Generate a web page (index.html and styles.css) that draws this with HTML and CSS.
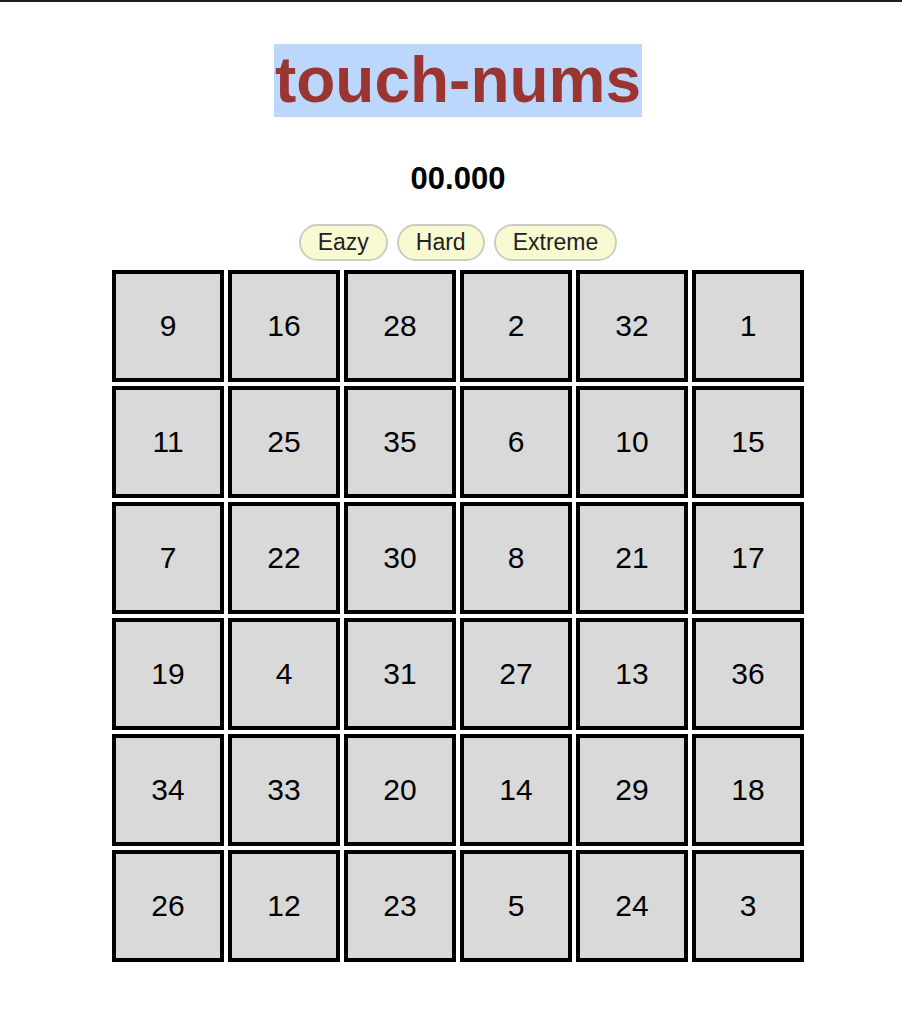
FILE: index.html
```html
<!DOCTYPE html>
<html lang="en">
<head>
<meta charset="utf-8">
<title>touch-nums</title>
<link rel="stylesheet" href="styles.css">
</head>
<body>
<div class="topbar"></div>
<main class="app">
  <h1 class="title">touch-nums</h1>
  <div class="timer">00.000</div>
  <div class="levels">
    <button class="level">Eazy</button>
    <button class="level">Hard</button>
    <button class="level">Extreme</button>
  </div>
  <div class="board">
    <div class="cell">9</div><div class="cell">16</div><div class="cell">28</div><div class="cell">2</div><div class="cell">32</div><div class="cell">1</div>
    <div class="cell">11</div><div class="cell">25</div><div class="cell">35</div><div class="cell">6</div><div class="cell">10</div><div class="cell">15</div>
    <div class="cell">7</div><div class="cell">22</div><div class="cell">30</div><div class="cell">8</div><div class="cell">21</div><div class="cell">17</div>
    <div class="cell">19</div><div class="cell">4</div><div class="cell">31</div><div class="cell">27</div><div class="cell">13</div><div class="cell">36</div>
    <div class="cell">34</div><div class="cell">33</div><div class="cell">20</div><div class="cell">14</div><div class="cell">29</div><div class="cell">18</div>
    <div class="cell">26</div><div class="cell">12</div><div class="cell">23</div><div class="cell">5</div><div class="cell">24</div><div class="cell">3</div>
  </div>
</main>
</body>
</html>
```
FILE: styles.css
```css
html, body {
  margin: 0;
  padding: 0;
  background: #ffffff;
}

body {
  font-family: "Liberation Sans", Arial, Helvetica, sans-serif;
  color: #000;
}

.topbar {
  height: 2px;
  background: #1e1e1e;
}

.app {
  padding-left: 14px;
  display: flex;
  flex-direction: column;
  align-items: center;
}

.title {
  margin: 42px 0 0 0;
  font-size: 64px;
  font-weight: bold;
  line-height: 73px;
  color: #9b3531;
  background: #bbd7fb;
  padding: 0 1px;
}

.timer {
  margin-top: 44px;
  font-size: 31px;
  font-weight: bold;
  line-height: 36px;
}

.levels {
  margin-top: 27px;
  display: flex;
  gap: 9px;
}

.level {
  height: 37px;
  padding: 0 17px;
  font-family: "Liberation Sans", Arial, Helvetica, sans-serif;
  font-size: 23px;
  color: #222;
  background: #fafad2;
  border: 2px solid #cdcdc4;
  border-radius: 19px;
}

.board {
  margin-top: 9px;
  display: grid;
  grid-template-columns: repeat(6, 112px);
  grid-auto-rows: 112px;
  gap: 4px;
}

.cell {
  box-sizing: border-box;
  border: 4px solid #000;
  background: #d9d9d9;
  display: flex;
  align-items: center;
  justify-content: center;
  font-size: 30px;
}
```
